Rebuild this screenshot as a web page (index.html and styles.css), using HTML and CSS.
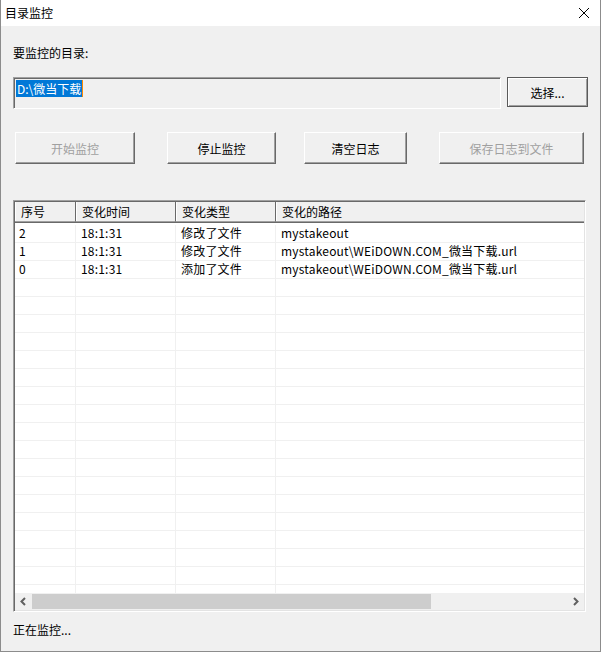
FILE: index.html
```html
<!DOCTYPE html>
<html lang="zh-CN">
<head>
    <meta charset="UTF-8">
    <title>目录监控</title>
    <link rel="stylesheet" href="styles.css">
</head>
<body>
    <section class="window">
        <div class="titlebar">
            <span class="title">目录监控</span>
            <svg class="close" width="12" height="12" viewBox="0 0 12 12">
                <path d="M1 1 L11 11 M11 1 L1 11" stroke="#000" stroke-width="1" fill="none"/>
            </svg>
        </div>
        <div class="client">
            <div class="label">要监控的目录:</div>
            <div class="dir-row">
                <div class="edit"><span class="selected">D:\微当下载</span></div>
                <button class="btn default">选择...</button>
            </div>
            <div class="actions">
                <button class="btn start" disabled>开始监控</button>
                <button class="btn stop">停止监控</button>
                <button class="btn clear">清空日志</button>
                <button class="btn save" disabled>保存日志到文件</button>
            </div>
            <div class="list">
                <div class="list-head">
                    <div class="hcell">序号</div>
                    <div class="hcell">变化时间</div>
                    <div class="hcell">变化类型</div>
                    <div class="hcell last">变化的路径</div>
                </div>
                <div class="list-body">
                    <div class="row"><div>2</div><div>18:1:31</div><div>修改了文件</div><div>mystakeout</div></div>
                    <div class="row"><div>1</div><div>18:1:31</div><div>修改了文件</div><div>mystakeout\WEiDOWN.COM_微当下载.url</div></div>
                    <div class="row"><div>0</div><div>18:1:31</div><div>添加了文件</div><div>mystakeout\WEiDOWN.COM_微当下载.url</div></div>
                    <div class="row"><div></div><div></div><div></div><div></div></div>
                    <div class="row"><div></div><div></div><div></div><div></div></div>
                    <div class="row"><div></div><div></div><div></div><div></div></div>
                    <div class="row"><div></div><div></div><div></div><div></div></div>
                    <div class="row"><div></div><div></div><div></div><div></div></div>
                    <div class="row"><div></div><div></div><div></div><div></div></div>
                    <div class="row"><div></div><div></div><div></div><div></div></div>
                    <div class="row"><div></div><div></div><div></div><div></div></div>
                    <div class="row"><div></div><div></div><div></div><div></div></div>
                    <div class="row"><div></div><div></div><div></div><div></div></div>
                    <div class="row"><div></div><div></div><div></div><div></div></div>
                    <div class="row"><div></div><div></div><div></div><div></div></div>
                    <div class="row"><div></div><div></div><div></div><div></div></div>
                    <div class="row"><div></div><div></div><div></div><div></div></div>
                    <div class="row"><div></div><div></div><div></div><div></div></div>
                    <div class="row"><div></div><div></div><div></div><div></div></div>
                    <div class="row"><div></div><div></div><div></div><div></div></div>
                    <div class="row"><div></div><div></div><div></div><div></div></div>
                </div>
                <div class="hscroll">
                    <svg class="arrow" width="17" height="17" viewBox="0 0 17 17">
                        <path d="M10 5 L6.5 8.5 L10 12" stroke="#606060" stroke-width="2" fill="none"/>
                    </svg>
                    <div class="track"><div class="thumb"></div></div>
                    <svg class="arrow" width="17" height="17" viewBox="0 0 17 17">
                        <path d="M7 5 L10.5 8.5 L7 12" stroke="#606060" stroke-width="2" fill="none"/>
                    </svg>
                </div>
            </div>
            <div class="status">正在监控...</div>
        </div>
    </section>
</body>
</html>
```

FILE: styles.css
```css
*{
    margin: 0;
    padding: 0;
    box-sizing: border-box;
}
body{
    font-family: "Noto Sans CJK SC", "Noto Sans", sans-serif;
    font-size: 12px;
    color: #000;
    background: #f0f0f0;
}
.window{
    width: 601px;
    height: 652px;
    border: 1px solid #8c8c8c;
    border-top: none;
    display: flex;
    flex-direction: column;
    overflow: hidden;
}
.titlebar{
    height: 26px;
    background: #fff;
    display: flex;
    align-items: center;
    justify-content: space-between;
    padding: 0 10px 0 4px;
}
.title{
    line-height: 16px;
}
.client{
    flex: 1;
    background: #f0f0f0;
    padding: 19px 0 0 11px;
    display: flex;
    flex-direction: column;
}
.label{
    line-height: 16px;
    height: 16px;
    padding-left: 1px;
}
.dir-row{
    margin-top: 16px;
    display: flex;
    align-items: flex-start;
    gap: 6px;
    padding-left: 1px;
}
.edit{
    width: 488px;
    height: 32px;
    border: 1px solid;
    border-color: #a0a0a0 #fff #fff #a0a0a0;
    box-shadow: inset 1px 1px 0 #696969;
    padding: 2px 0 0 2px;
}
.selected{
    display: inline-block;
    background: #0078d7;
    color: #fff;
    line-height: 17px;
    height: 17px;
    padding: 0 1px;
    border-right: 1px solid #ff8a00;
}
.btn{
    font-family: inherit;
    font-size: 12px;
    color: #000;
    background: #f0f0f0;
    border: 1px solid;
    border-color: #fff #696969 #696969 #fff;
    box-shadow: inset -1px -1px 0 #a0a0a0;
    height: 32px;
}
.btn:disabled{
    color: #a0a0a0;
}
.btn.default{
    width: 81px;
    height: 30px;
    border: 1px solid #5a5a5a;
    box-shadow: inset 1px 1px 0 #fff, inset -1px -1px 0 #a0a0a0;
}
.actions{
    margin-top: 23px;
    display: flex;
    height: 32px;
    padding-left: 3px;
}
.start{ width: 120px; }
.stop{ width: 109px; margin-left: 32px; }
.clear{ width: 103px; margin-left: 28px; }
.save{ width: 145px; margin-left: 32px; }
.list{
    margin-top: 36px;
    margin-left: 1px;
    width: 573px;
    height: 412px;
    border: 1px solid;
    border-color: #a0a0a0 #fff #fff #a0a0a0;
    box-shadow: inset 1px 1px 0 #696969, inset -1px -1px 0 #e3e3e3;
    padding: 1px;
    display: flex;
    flex-direction: column;
    background: #fff;
}
.list-head{
    display: grid;
    grid-template-columns: 61px 100px 100px 1fr;
    height: 21px;
    background: #f0f0f0;
    border-bottom: 1px solid #696969;
    flex: none;
}
.hcell{
    line-height: 19px;
    padding-left: 6px;
    border-right: 1px solid #696969;
    box-shadow: inset 1px 0 0 #fff;
    border-bottom: 1px solid #a0a0a0;
}
.hcell.last{
    border-right: none;
}
.list-body{
    flex: 1;
    overflow: hidden;
    padding-top: 2px;
}
.row{
    display: grid;
    grid-template-columns: 61px 100px 100px 1fr;
    height: 18px;
}
.row div{
    line-height: 15px;
    padding: 0 0 2px 5px;
    border-right: 1px solid #f0f0f0;
    border-bottom: 1px solid #f0f0f0;
    white-space: nowrap;
    letter-spacing: 0.2px;
}
.row div:first-child{
    padding-left: 4px;
}
.row div:last-child{
    border-right: none;
}
.hscroll{
    flex: none;
    height: 17px;
    display: flex;
    background: #f0f0f0;
}
.arrow{
    flex: none;
}
.track{
    flex: 1;
    padding: 1px 0;
}
.thumb{
    width: 399px;
    height: 15px;
    background: #cdcdcd;
}
.status{
    margin-top: 10px;
    line-height: 16px;
    padding-left: 1px;
}
```
